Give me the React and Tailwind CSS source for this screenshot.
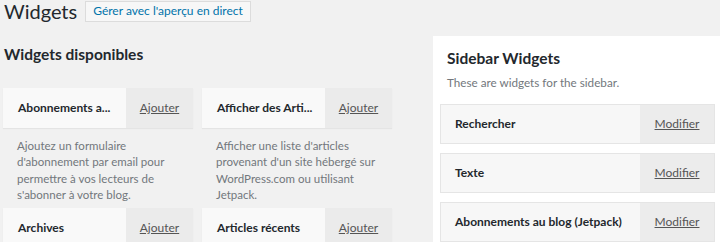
const available = [
    {
        title: 'Abonnements a...',
        lines: ['Ajoutez un formulaire', "d'abonnement par email pour", 'permettre à vos lecteurs de', "s'abonner à votre blog."],
    },
    {
        title: 'Afficher des Arti...',
        lines: ["Afficher une liste d'articles", "provenant d'un site hébergé sur", 'WordPress.com ou utilisant', 'Jetpack.'],
    },
    { title: 'Archives', lines: [] },
    { title: 'Articles récents', lines: [] },
];

const sidebar = ['Rechercher', 'Texte', 'Abonnements au blog (Jetpack)'];

function WidgetCard({ title, lines }) {
    return (
        <div>
            <div className="flex h-[40px] shadow-[0_1px_1px_rgba(0,0,0,0.05)]">
                <div className="flex-1 bg-[#f9f9f9] flex items-center pl-[15px] text-[12px] font-bold whitespace-nowrap text-[#23282d]">
                    {title}
                </div>
                <div className="w-[67px] bg-[#ebebeb] flex items-center justify-center text-[12px] text-[#555] underline">
                    Ajouter
                </div>
            </div>
            {lines.length > 0 && (
                <p className="pl-[14px] pt-[10px] pb-[5px] text-[11.5px] leading-[16.3px] text-[#72777c] whitespace-nowrap">
                    {lines.map((l) => (
                        <span key={l} className="block">{l}</span>
                    ))}
                </p>
            )}
        </div>
    );
}

export default function App() {
    return (
        <div className="w-[720px] h-[242px] overflow-hidden bg-[#f1f1f1] font-['Lato',sans-serif] text-[#23282d]">
            <div className="flex items-center gap-[8px] pl-[4px] h-[22px]">
                <h1 className="text-[20px] leading-[22px] font-normal">Widgets</h1>
                <span className="border border-[#dcdcdc] bg-[#f7f7f7] px-[7px] h-[21px] flex items-center text-[12px] text-[#0073aa]">
                    Gérer avec l&apos;aperçu en direct
                </span>
            </div>
            <div className="flex mt-[14px]">
                <div className="w-[400px] shrink-0 pl-[3px]">
                    <h2 className="pl-[1px] pt-[8px] text-[15.5px] font-bold leading-[20px]">Widgets disponibles</h2>
                    <div className="grid grid-cols-[190px_190px] gap-x-[9px] mt-[24px]">
                        {available.map((w) => (
                            <WidgetCard key={w.title} {...w} />
                        ))}
                    </div>
                </div>
                <div className="ml-[33px] flex-1 bg-white pl-[7px] pr-[5px]">
                    <h3 className="pl-[7px] pt-[12px] text-[15.5px] font-bold leading-[20px]">Sidebar Widgets</h3>
                    <p className="pl-[7px] pt-[6px] text-[11.7px] leading-[16px] text-[#72777c]">These are widgets for the sidebar.</p>
                    <div className="mt-[14px] flex flex-col gap-[9px]">
                        {sidebar.map((s) => (
                            <div key={s} className="flex h-[40px] border border-[#e5e5e5]">
                                <div className="flex-1 bg-[#f7f7f7] flex items-center pl-[14px] text-[12px] font-bold whitespace-nowrap">{s}</div>
                                <div className="w-[74px] bg-[#ececec] flex items-center justify-center text-[12px] text-[#555] underline">
                                    Modifier
                                </div>
                            </div>
                        ))}
                    </div>
                </div>
            </div>
        </div>
    );
}
